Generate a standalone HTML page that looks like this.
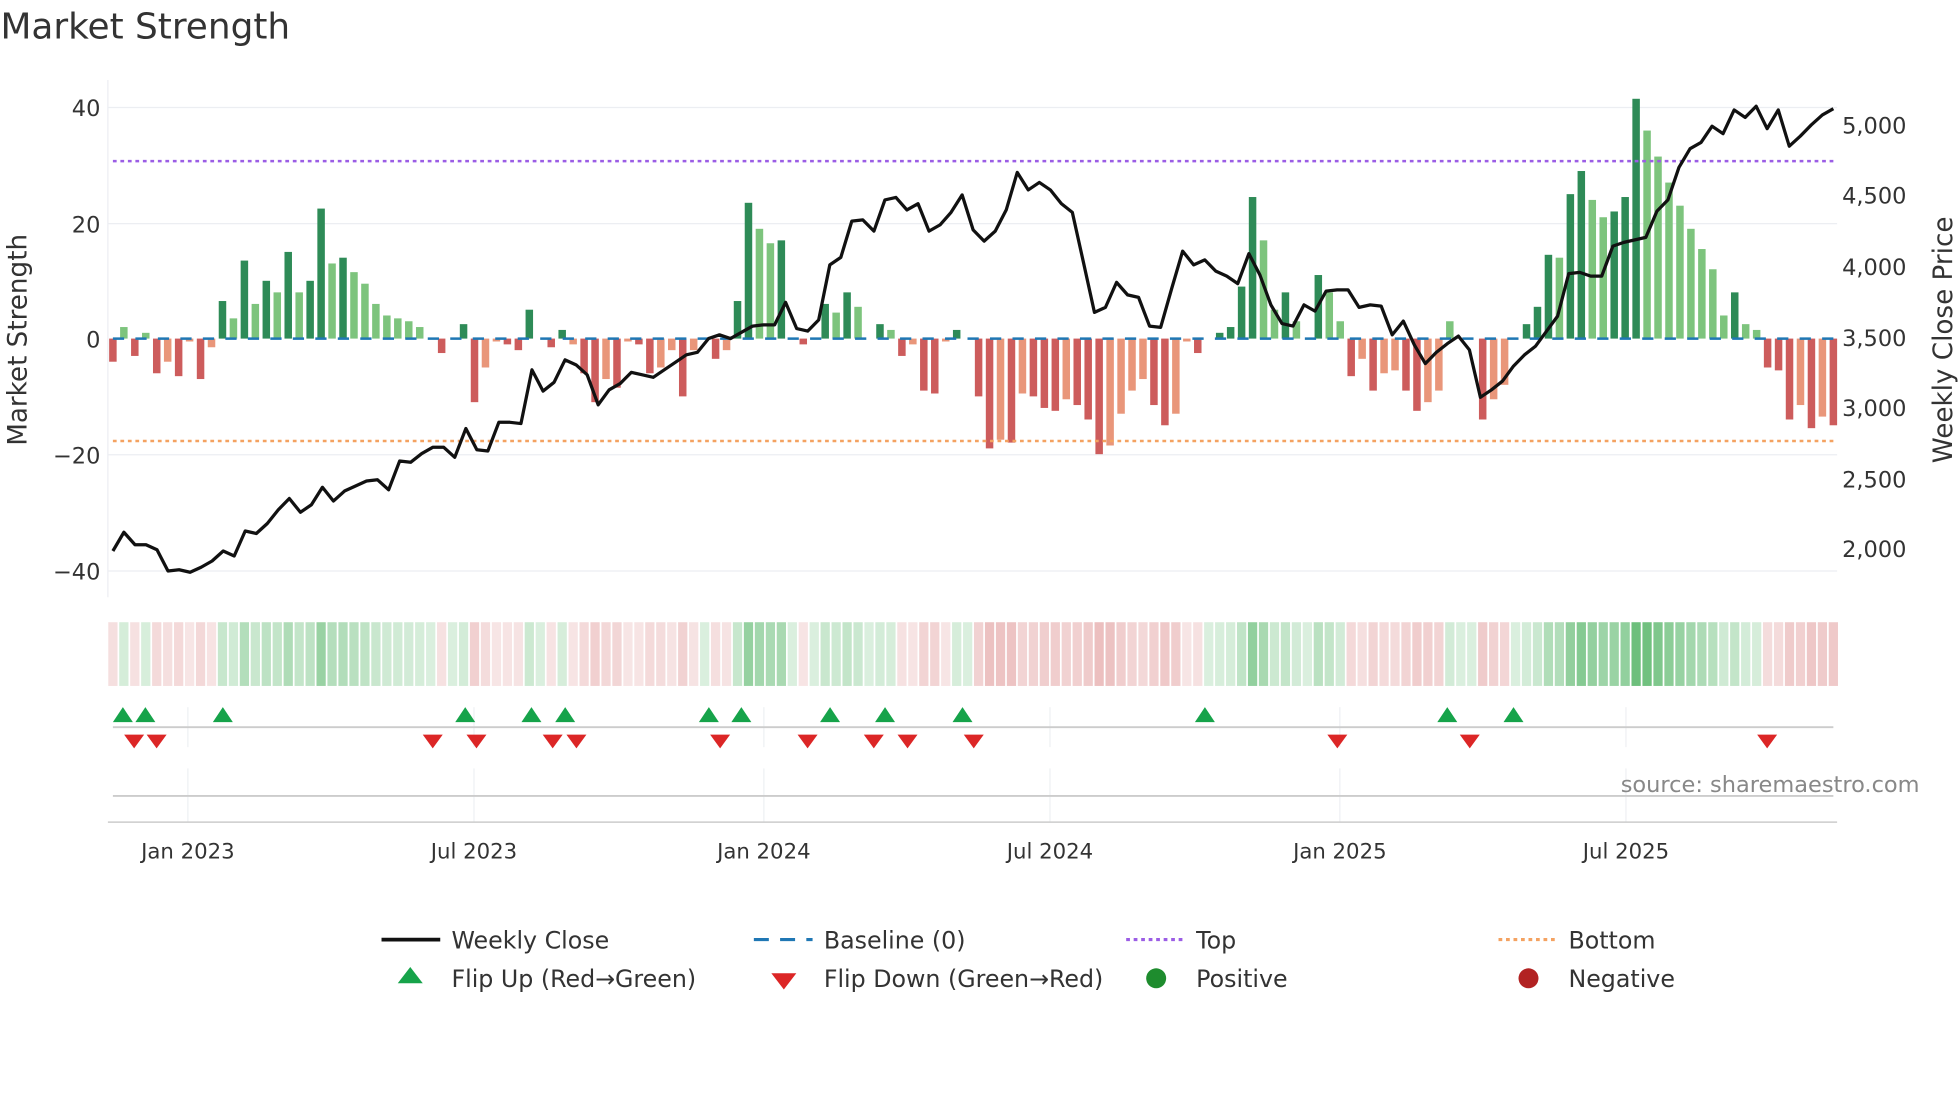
<!DOCTYPE html>
<html><head><meta charset="utf-8"><style>
html,body{margin:0;padding:0;background:#fff;}
svg{display:block;font-family:"DejaVu Sans","Liberation Sans",sans-serif;}
</style></head><body>
<svg id="s" width="1960" height="1102" viewBox="0 0 1568 882" xmlns="http://www.w3.org/2000/svg">
<rect width="1568" height="882" fill="#fff"/>
<text x="0" y="31" font-size="28.7" fill="#333">Market Strength</text>
<g stroke="#eceef2" stroke-width="1">
<line x1="86" y1="86" x2="1470" y2="86"/><line x1="86" y1="179" x2="1470" y2="179"/>
<line x1="86" y1="364" x2="1470" y2="364"/><line x1="86" y1="457" x2="1470" y2="457"/>
<line x1="86" y1="64" x2="86" y2="478"/>
</g>
<g stroke="#eef0f3" stroke-width="1">
<line x1="150" y1="566" x2="150" y2="598"/><line x1="379" y1="566" x2="379" y2="598"/><line x1="611" y1="566" x2="611" y2="598"/><line x1="840" y1="566" x2="840" y2="598"/><line x1="1072" y1="566" x2="1072" y2="598"/><line x1="1301" y1="566" x2="1301" y2="598"/>
<line x1="150" y1="615" x2="150" y2="658"/><line x1="379" y1="615" x2="379" y2="658"/><line x1="611" y1="615" x2="611" y2="658"/><line x1="840" y1="615" x2="840" y2="658"/><line x1="1072" y1="615" x2="1072" y2="658"/><line x1="1301" y1="615" x2="1301" y2="658"/>
</g>
<g font-size="18" fill="#333" text-anchor="end">
<text x="80" y="93">40</text><text x="80" y="186">20</text><text x="80" y="278">0</text><text x="80" y="371">−20</text><text x="80" y="464">−40</text>
</g>
<g font-size="18" fill="#333">
<text x="1474" y="107">5,000</text><text x="1474" y="163">4,500</text><text x="1474" y="220">4,000</text><text x="1474" y="277">3,500</text><text x="1474" y="333">3,000</text><text x="1474" y="390">2,500</text><text x="1474" y="446">2,000</text>
</g>
<text transform="translate(21,272) rotate(-90)" font-size="21" fill="#333" text-anchor="middle">Market Strength</text>
<text transform="translate(1562,272) rotate(-90)" font-size="21" fill="#333" text-anchor="middle">Weekly Close Price</text>
<g id="bars"></g>
<g id="heat"></g>
<line x1="90" y1="129" x2="1470" y2="129" stroke="#9b5de5" stroke-width="2" stroke-dasharray="3,3"/>
<line x1="90" y1="353" x2="1470" y2="353" stroke="#f4a261" stroke-width="2" stroke-dasharray="3,3"/>
<polyline id="price" fill="none" stroke="#111" stroke-width="2.6" stroke-linejoin="round"/>
<line x1="90" y1="582" x2="1467" y2="582" stroke="#ccc" stroke-width="1.5"/>
<line x1="90" y1="637" x2="1467" y2="637" stroke="#ccc" stroke-width="1.5"/>
<line x1="86" y1="658" x2="1470" y2="658" stroke="#ccc" stroke-width="1.2"/>
<g id="mk"></g>
<text x="1536" y="634" font-size="18" fill="#888" text-anchor="end">source: sharemaestro.com</text>
<g font-size="17" fill="#333" text-anchor="middle">
<text x="150" y="687">Jan 2023</text><text x="379" y="687">Jul 2023</text><text x="611" y="687">Jan 2024</text><text x="840" y="687">Jul 2024</text><text x="1072" y="687">Jan 2025</text><text x="1301" y="687">Jul 2025</text>
</g>
<g font-size="19" fill="#333">
<line x1="305" y1="752" x2="352" y2="752" stroke="#111" stroke-width="3"/><text x="361" y="759">Weekly Close</text>
<line x1="603" y1="752" x2="650" y2="752" stroke="#1f77b4" stroke-width="2.5" stroke-dasharray="12,9"/><text x="659" y="759">Baseline (0)</text>
<line x1="901" y1="752" x2="946" y2="752" stroke="#9b5de5" stroke-width="2.5" stroke-dasharray="3,3"/><text x="957" y="759">Top</text>
<line x1="1199" y1="752" x2="1244" y2="752" stroke="#f4a261" stroke-width="2.5" stroke-dasharray="3,3"/><text x="1255" y="759">Bottom</text>
<polygon points="328,774 338,787 318,787" fill="#16a34a"/><text x="361" y="790">Flip Up (Red→Green)</text>
<polygon points="617,779 637,779 627,792" fill="#dc2626"/><text x="659" y="790">Flip Down (Green→Red)</text>
<circle cx="925" cy="783" r="8" fill="#1e8c2e"/><text x="957" y="790">Positive</text>
<circle cx="1223" cy="783" r="8" fill="#b22222"/><text x="1255" y="790">Negative</text>
</g>
</svg>
<script>
var v=[-4,2,-3,1,-6,-4,-6.5,-0.5,-7,-1.5,6.5,3.5,13.5,6,10,8,15,8,10,22.5,13,14,11.5,9.5,6,4,3.5,3,2,0,-2.5,0,2.5,-11,-5,-0.5,-1,-2,5,0,-1.5,1.5,-1,-6,-11,-7,-8.5,-0.5,-1,-6,-5,-2,-10,-2,0,-3.5,-2,6.5,23.5,19,16.5,17,0,-1,0,6,4.5,8,5.5,0,2.5,1.5,-3,-1,-9,-9.5,-0.5,1.5,0,-10,-19,-17.5,-18,-9.5,-10,-12,-12.5,-10.5,-11.5,-14,-20,-18.5,-13,-9,-7,-11.5,-15,-13,-0.5,-2.5,0,1,2,9,24.5,17,5,8,3,0,11,8,3,-6.5,-3.5,-9,-6,-5.5,-9,-12.5,-11,-9,3,0,0,-14,-10.5,-8,0,2.5,5.5,14.5,14,25,29,24,21,22,24.5,41.5,36,31.5,27,23,19,15.5,12,4,8,2.5,1.5,-5,-5.5,-14,-11.5,-15.5,-13.5,-15];
var NS='http://www.w3.org/2000/svg';
function el(t,a,p){var e=document.createElementNS(NS,t);for(var k in a)e.setAttribute(k,a[k]);p.appendChild(e);return e;}
var bars=document.getElementById('bars'),heat=document.getElementById('heat');
var n=v.length,dx=(1467-90)/(n-1);
for(var i=0;i<n;i++){var x=90+i*dx,val=v[i],prev=i?v[i-1]:0;
 var strong=Math.abs(val)>=Math.abs(prev);
 var c=val>=0?(strong?'#2e8b57':'#7dc47d'):(strong?'#cd5c5c':'#e9967a');
 var h=Math.abs(val)*4.625;
 if(Math.abs(val)>0.2)el('rect',{x:x-3,y:val>0?271-h:271,width:6,height:h,fill:c},bars);
 var a=Math.min(1,0.25+Math.abs(val)/40*0.8);
 var hc=val>=0?'rgba(60,170,80,'+a*0.75+')':'rgba(205,90,90,'+a*0.6+')';
 el('rect',{x:x-3.7,y:498,width:7.4,height:51,fill:hc},heat);}
el('line',{x1:90,y1:271,x2:1467,y2:271,stroke:'#1f77b4','stroke-width':2,'stroke-dasharray':'9,9'},bars);
var py=[441,426,436,436,440,457,456,458,454,449,441,445,425,427,419,408,399,410,404,390,401,393,389,385,384,392,369,370,363,358,358,366,343,360,361,338,338,339,296,313,306,288,292,300,324,312,307,298,300,302,296,290,284,282,271,268,271,266,261,260,260,242,263,265,256,212,206,177,176,185,160,158,168,163,185,180,170,156,184,193,185,168,138,152,146,152,163,170,210,250,246,226,236,238,261,262,231,201,212,208,217,221,227,203,220,244,259,261,244,249,233,232,232,246,244,245,268,257,276,291,282,275,269,280,318,312,305,293,284,277,265,253,219,218,221,221,197,194,192,190,169,160,134,119,114,101,107,88,94,85,103,88,117,109,100,92,87];
var pts=[],m=py.length,pdx=(1467-90)/(m-1);
for(var j=0;j<m;j++)pts.push((90+j*pdx).toFixed(1)+','+py[j]);
document.getElementById('price').setAttribute('points',pts.join(' '));
var mk=document.getElementById('mk');
[98,116,178,372,425,452,567,593,664,708,770,964,1158,1211].forEach(function(x){el('polygon',{points:(x)+',566 '+(x+8)+',578 '+(x-8)+',578',fill:'#16a34a'},mk);});
[107,125,346,381,442,461,576,646,699,726,779,1070,1176,1414].forEach(function(x){el('polygon',{points:(x-8)+',588 '+(x+8)+',588 '+x+',599',fill:'#dc2626'},mk);});
</script>
</body></html>
